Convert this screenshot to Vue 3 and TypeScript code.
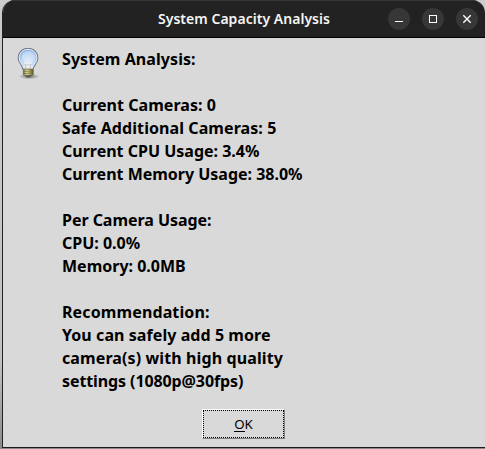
<script setup lang="ts">
interface Line {
  text: string
  tracking: number
}

const title = 'System Capacity Analysis'
const lines: Line[] = [
  { text: 'System Analysis:', tracking: 0.07 },
  { text: '', tracking: 0 },
  { text: 'Current Cameras: 0', tracking: 0.06 },
  { text: 'Safe Additional Cameras: 5', tracking: 0.08 },
  { text: 'Current CPU Usage: 3.4%', tracking: 0 },
  { text: 'Current Memory Usage: 38.0%', tracking: -0.01 },
  { text: '', tracking: 0 },
  { text: 'Per Camera Usage:', tracking: -0.04 },
  { text: 'CPU: 0.0%', tracking: 0 },
  { text: 'Memory: 0.0MB', tracking: 0 },
  { text: '', tracking: 0 },
  { text: 'Recommendation:', tracking: 0.12 },
  { text: 'You can safely add 5 more', tracking: 0.07 },
  { text: 'camera(s) with high quality', tracking: 0.11 },
  { text: 'settings (1080p@30fps)', tracking: -0.1 },
]
</script>

<template>
  <div class="desktop">
    <section class="window" role="dialog" :aria-label="title">
      <header class="titlebar">
        <h1 class="title">{{ title }}</h1>
        <nav class="controls">
          <button class="control" aria-label="Minimize">
            <svg width="22" height="22" viewBox="0 0 22 22"><rect x="7" y="13" width="8" height="1" fill="#fff" /></svg>
          </button>
          <button class="control" aria-label="Maximize">
            <svg width="22" height="22" viewBox="0 0 22 22"><rect x="7.5" y="7.5" width="7" height="7" fill="none" stroke="#fff" /></svg>
          </button>
          <button class="control" aria-label="Close">
            <svg width="22" height="22" viewBox="0 0 22 22"><path d="M7.300 7.300l7.400 7.400M14.700 7.300l-7.400 7.400" stroke="#fff" stroke-width="1.4" /></svg>
          </button>
        </nav>
      </header>
      <main class="body">
        <svg class="bulb" width="32" height="32" viewBox="0 0 32 32">
          <defs>
            <radialGradient id="glass" cx="50%" cy="65%" r="65%">
              <stop offset="0" stop-color="#e6effa" />
              <stop offset="0.5" stop-color="#bcd4f3" />
              <stop offset="1" stop-color="#7eaae4" />
            </radialGradient>
            <linearGradient id="brass" x1="0" x2="1" y1="0" y2="0">
              <stop offset="0" stop-color="#77713c" />
              <stop offset="0.35" stop-color="#eeeab0" />
              <stop offset="0.65" stop-color="#b5ad62" />
              <stop offset="1" stop-color="#5b5528" />
            </linearGradient>
            <radialGradient id="shade">
              <stop offset="0" stop-color="#000" stop-opacity="0.5" />
              <stop offset="1" stop-color="#000" stop-opacity="0" />
            </radialGradient>
          </defs>
          <g transform="translate(-0.6 -0.2) scale(1.04)">
            <ellipse cx="17" cy="27.500" rx="10" ry="2.800" fill="url(#shade)" />
            <path d="M16 0.500C10.200 0.500 6.500 4.500 6.500 9.700C6.500 14.500 10.300 16 11 20.500H21C21.700 16 25.500 14.500 25.500 9.700C25.500 4.500 21.800 0.500 16 0.500Z" fill="url(#glass)" stroke="#727780" />
            <path d="M16 1.500C10.900 1.500 7.500 5.200 7.500 9.700C7.500 14 11.200 15.500 12 19.800H20C20.800 15.500 24.500 14 24.500 9.700C24.500 5.200 21.100 1.500 16 1.500Z" fill="none" stroke="#f1f5fb" stroke-width="0.8" />
            <ellipse cx="16.500" cy="8.500" rx="6.500" ry="5.400" fill="#dce9f9" opacity="0.5" />
            <path d="M12.300 13C14 15 18 15 20 13L19.800 20H12.200Z" fill="#f0f1f2" opacity="0.8" />
            <path d="M14 20L13 15.500L15 17L16.300 15.500L17.500 17L19 15.500L18 20" fill="none" stroke="#b7b9bc" stroke-width="0.7" />
            <rect x="11.500" y="20.500" width="9.500" height="6" rx="1.200" fill="url(#brass)" stroke="#706a38" stroke-width="0.8" />
            <path d="M12 22.700l8.500 -0.500M12 24.700l8.500 -0.500" stroke="#67602e" stroke-width="0.7" />
            <path d="M13 26.500H19.500L18 28.500H14.500Z" fill="#5c5b55" />
          </g>
        </svg>
        <div class="message">
          <p v-for="(line, i) in lines" :key="i" class="line" :style="{ letterSpacing: line.tracking + 'px' }">{{ line.text }}</p>
        </div>
      </main>
      <footer class="footer">
        <button class="ok"><span class="focus"><span><span class="mnemonic">O</span>K</span></span></button>
      </footer>
    </section>
  </div>
</template>

<style>
body {
  overflow: hidden;
}
</style>

<style scoped>
.desktop {
  box-sizing: border-box;
  width: 485px;
  height: 449px;
  padding: 0 0 1px 2px;
  background: linear-gradient(#cccccc, #c2c2c2 80%, #8c898b);
}
.window {
  box-sizing: border-box;
  width: 483px;
  height: 448px;
  display: flex;
  flex-direction: column;
  border-left: 1px solid #222;
  border-bottom: 1px solid #1c1a1b;
  border-radius: 13px 13px 0 0;
  background: #d9d9d9;
  overflow: hidden;
}
.titlebar {
  box-sizing: border-box;
  height: 38px;
  flex: none;
  display: grid;
  grid-template-columns: 1fr 172px 1fr;
  align-items: center;
  background: #222;
  border-top: 1px solid #353535;
  border-bottom: 1px solid #000;
}
.title {
  grid-column: 2;
  margin: 0;
  white-space: nowrap;
  font: 600 14px/20px "Noto Sans", sans-serif;
  letter-spacing: 0.03px;
  color: #f5f5f5;
}
.controls {
  display: flex;
  justify-content: flex-end;
  gap: 12px;
  padding-right: 7px;
}
.control {
  width: 22px;
  height: 22px;
  padding: 0;
  border: 0;
  border-radius: 50%;
  background: #373737;
}
.control svg {
  display: block;
}
.body {
  display: flex;
  padding: 10px 0 0 9px;
}
.bulb {
  flex: none;
}
.message {
  margin-left: 18px;
}
.line {
  margin: 0;
  height: 23px;
  white-space: nowrap;
  font: 700 16px/23px "Noto Sans", sans-serif;
  color: #000;
}
.footer {
  display: flex;
  justify-content: center;
  margin-top: 16px;
  padding-right: 1px;
}
.ok {
  box-sizing: border-box;
  width: 83px;
  height: 30px;
  padding: 0;
  border: 1px solid;
  border-color: #fff #828282 #828282 #fff;
  background: #d9d9d9;
  font: 13.3px/18px "Noto Sans", sans-serif;
  color: #000;
}
.focus {
  box-sizing: border-box;
  display: flex;
  align-items: center;
  justify-content: center;
  width: 81px;
  height: 28px;
  border: 1px dotted #000;
}
.mnemonic {
  background: linear-gradient(#000, #000) 0 calc(100% - 1px) / 100% 1px no-repeat;
}
</style>
